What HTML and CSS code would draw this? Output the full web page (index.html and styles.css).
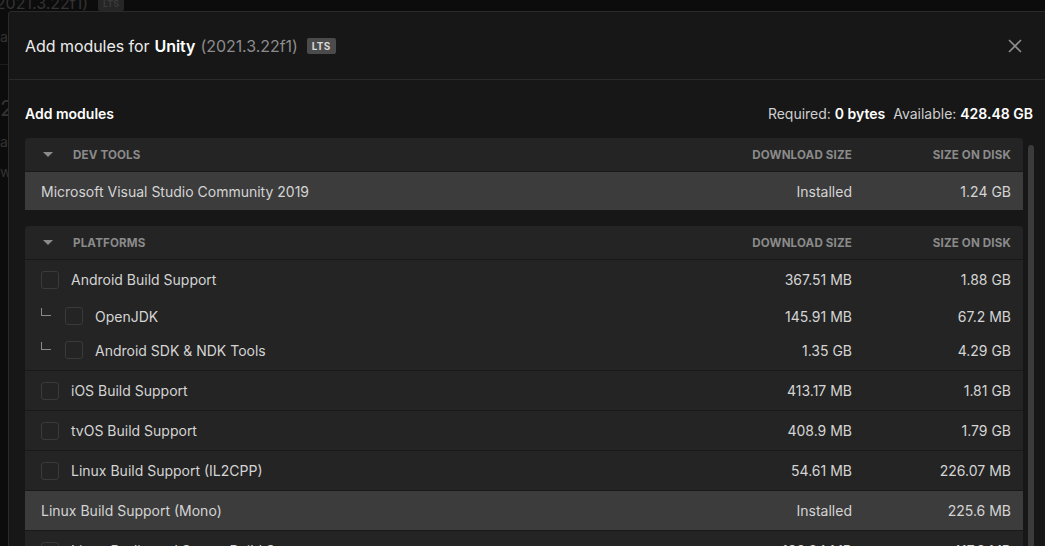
FILE: index.html
```html
<!DOCTYPE html>
<html lang="en">
<head>
<meta charset="utf-8">
<title>Unity Hub – Add modules</title>
<link rel="stylesheet" href="styles.css">
</head>
<body>
<div class="backdrop">
  <div class="bg-head"><span>(2021.3.22f1)</span><span class="bg-badge">LTS</span></div>
  <div class="bg-line">an</div>
  <div class="bg-sep"></div>
  <div class="bg-big">20</div>
  <div class="bg-line">ar</div>
  <div class="bg-line">ws</div>
</div>

<div class="modal">
  <header class="modal-head">
    <h1 class="title">Add modules for <b>Unity</b> <span class="ver">(2021.3.22f1)</span> <span class="badge">LTS</span></h1>
    <button class="close" aria-label="Close">
      <svg width="14" height="14" viewBox="0 0 14 14"><path d="M1 1L13 13M13 1L1 13" stroke="#8e8e8e" stroke-width="1.6" fill="none"/></svg>
    </button>
  </header>

  <div class="modal-body">
    <div class="summary">
      <h2>Add modules</h2>
      <p class="space">Required: <b>0 bytes</b>&nbsp; Available: <b>428.48 GB</b></p>
    </div>

    <div class="scroll">
      <div class="list">
        <section class="card">
          <div class="row head">
            <span class="name"><i class="caret"></i>DEV TOOLS</span>
            <span class="num">DOWNLOAD SIZE</span>
            <span class="num">SIZE ON DISK</span>
          </div>
          <div class="row item installed">
            <span class="name">Microsoft Visual Studio Community 2019</span>
            <span class="num">Installed</span>
            <span class="num">1.24 GB</span>
          </div>
        </section>

        <section class="card">
          <div class="row head">
            <span class="name"><i class="caret"></i>PLATFORMS</span>
            <span class="num">DOWNLOAD SIZE</span>
            <span class="num">SIZE ON DISK</span>
          </div>
          <div class="group">
            <div class="row item">
              <span class="name"><i class="box"></i>Android Build Support</span>
              <span class="num">367.51 MB</span>
              <span class="num">1.88 GB</span>
            </div>
            <div class="row item sub">
              <span class="name"><i class="elbow"></i><i class="box"></i>OpenJDK</span>
              <span class="num">145.91 MB</span>
              <span class="num">67.2 MB</span>
            </div>
            <div class="row item sub">
              <span class="name"><i class="elbow"></i><i class="box"></i>Android SDK &amp; NDK Tools</span>
              <span class="num">1.35 GB</span>
              <span class="num">4.29 GB</span>
            </div>
          </div>
          <div class="row item">
            <span class="name"><i class="box"></i>iOS Build Support</span>
            <span class="num">413.17 MB</span>
            <span class="num">1.81 GB</span>
          </div>
          <div class="row item">
            <span class="name"><i class="box"></i>tvOS Build Support</span>
            <span class="num">408.9 MB</span>
            <span class="num">1.79 GB</span>
          </div>
          <div class="row item">
            <span class="name"><i class="box"></i>Linux Build Support (IL2CPP)</span>
            <span class="num">54.61 MB</span>
            <span class="num">226.07 MB</span>
          </div>
          <div class="row item installed">
            <span class="name">Linux Build Support (Mono)</span>
            <span class="num">Installed</span>
            <span class="num">225.6 MB</span>
          </div>
          <div class="row item">
            <span class="name"><i class="box"></i>Linux Dedicated Server Build Support</span>
            <span class="num">103.84 MB</span>
            <span class="num">417.3 MB</span>
          </div>
        </section>
      </div>
      <div class="scrollbar"><div class="thumb"></div></div>
    </div>
  </div>
</div>
</body>
</html>
```

FILE: styles.css
```css
* { box-sizing: border-box; }

html, body {
  margin: 0;
  height: 100%;
  overflow: hidden;
  background: #0c0c0c;
  font-family: Inter, "Noto Sans", "Liberation Sans", sans-serif;
  -webkit-font-smoothing: antialiased;
}

/* page dimmed behind the dialog */
.backdrop {
  color: #333333;
  line-height: 1;
  margin-top: -4px;
  margin-left: -10px;
}
.bg-head { display: flex; align-items: center; gap: 10px; height: 14px; font-size: 16px; }
.bg-badge { background: #262626; color: #3a3a3a; font-size: 9px; font-weight: 700; padding: 3px 5px; border-radius: 2px; }
.bg-line { height: 30px; padding-top: 20px; padding-left: 10px; font-size: 14px; }
.bg-sep { height: 1px; background: #1c1c1c; margin: 24px 0 20px; }
.bg-big { height: 30px; padding-top: 12px; padding-left: 10px; font-size: 22px; }

.modal {
  position: absolute;
  left: 8px;
  top: 11px;
  width: 1060px;
  height: 560px;
  background: #171717;
  border: 1px solid #2b2b2b;
  border-radius: 3px 0 0 0;
  display: flex;
  flex-direction: column;
}

.modal-head {
  height: 68px;
  flex: none;
  display: flex;
  align-items: center;
  justify-content: space-between;
  padding: 0 24px 0 16px;
  border-bottom: 1px solid #2a2a2a;
  width: 1037px;
}
.title {
  margin: 0;
  font-size: 16px;
  font-weight: 400;
  color: #ececec;
  display: flex;
  align-items: center;
  gap: 5px;
  letter-spacing: -0.05px;
}
.title b { font-weight: 600; color: #ffffff; }
.ver { color: #8c8c8c; }
.badge {
  margin-left: 4px;
  background: #4b4b4b;
  color: #d8d8d8;
  font-size: 10px;
  font-weight: 700;
  padding: 2px 5px;
  border-radius: 2px;
  letter-spacing: 0.3px;
}
.close {
  background: none;
  border: 0;
  padding: 0;
  width: 14px;
  height: 14px;
  display: block;
}
.close svg { display: block; }

.modal-body {
  flex: 1;
  padding: 0 0 0 16px;
  width: 1037px;
  display: flex;
  flex-direction: column;
}

.summary {
  display: flex;
  justify-content: space-between;
  align-items: center;
  height: 58px;
  padding: 8px 13px 0 0;
}
.summary h2 { margin: 0; font-size: 14px; font-weight: 600; color: #ffffff; }
.space { margin: 0; font-size: 14px; color: #cfcfcf; }
.space b { font-weight: 600; color: #ffffff; }

.scroll {
  display: flex;
  gap: 5px;
  flex: 1;
}
.list {
  width: 998px;
  display: flex;
  flex-direction: column;
  gap: 16px;
}
.scrollbar {
  width: 7px;
  padding-top: 7px;
}
.thumb {
  width: 6px;
  height: 420px;
  background: #3b3b3b;
  border-radius: 3px;
}

.card {
  background: #242424;
  border-radius: 4px 4px 0 0;
  overflow: hidden;
}

.row {
  display: grid;
  grid-template-columns: 1fr 160px 159px;
  align-items: center;
  padding: 0 12px 0 16px;
}
.num { text-align: right; }

.head {
  height: 34px;
  color: #8b8b8b;
  font-size: 11.6px;
  font-weight: 700;
  letter-spacing: 0.15px;
  border-bottom: 1px solid #181818;
}
.head .name { display: flex; align-items: center; }
.caret {
  width: 0;
  height: 0;
  border-left: 5px solid transparent;
  border-right: 5px solid transparent;
  border-top: 5px solid #8b8b8b;
  margin: 0 20px 0 2px;
}

.item {
  height: 40px;
  color: #d4d4d4;
  font-size: 14px;
  border-bottom: 1px solid #191919;
}
.item .name { display: flex; align-items: center; }
.installed { background: #3c3c3c; }
.card > .installed:nth-child(2) { border-bottom: 0; height: 38px; }

.group { border-bottom: 1px solid #191919; padding-bottom: 3px; }
.group .item { border-bottom: 0; }
.group .item:first-child { height: 39px; }
.group .sub { height: 34px; }

.box {
  width: 18px;
  height: 18px;
  border: 1px solid #3a3a3a;
  border-radius: 3px;
  margin-right: 12px;
  flex: none;
}
.elbow {
  width: 10px;
  height: 8px;
  border-left: 1px solid #8a8a8a;
  border-bottom: 1px solid #8a8a8a;
  margin: -8px 14px 0 0;
  flex: none;
}
```
